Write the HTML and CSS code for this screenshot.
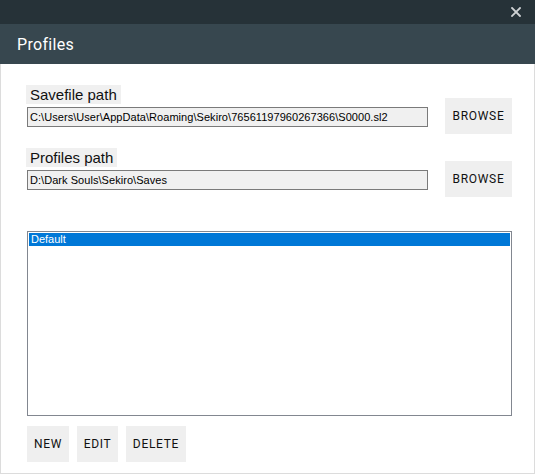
FILE: index.html
```html
<!DOCTYPE html>
<html>
<head>
<meta charset="utf-8">
<link rel="stylesheet" href="styles.css">
</head>
<body>
<div class="window">
  <div class="titlebar">
    <span class="close" aria-label="Close">
      <svg width="10" height="10" viewBox="0 0 10 10"><path d="M1 1 L9 9 M9 1 L1 9" stroke="#cfd2d4" stroke-width="1.8" stroke-linecap="square" fill="none"/></svg>
    </span>
  </div>
  <div class="header">Profiles</div>
  <div class="content">
    <div class="row">
      <div class="field">
        <span class="label">Savefile path</span>
        <div class="textbox">C:\Users\User\AppData\Roaming\Sekiro\76561197960267366\S0000.sl2</div>
      </div>
      <button class="btn browse">BROWSE</button>
    </div>
    <div class="row row2">
      <div class="field">
        <span class="label">Profiles path</span>
        <div class="textbox">D:\Dark Souls\Sekiro\Saves</div>
      </div>
      <button class="btn browse">BROWSE</button>
    </div>
    <div class="listbox">
      <div class="item selected">Default</div>
    </div>
    <div class="actions">
      <button class="btn btn-new">NEW</button>
      <button class="btn btn-edit">EDIT</button>
      <button class="btn btn-delete">DELETE</button>
    </div>
  </div>
</div>
</body>
</html>
```

FILE: styles.css
```css
html, body {
  margin: 0;
  padding: 0;
  background: #ffffff;
}

.window {
  width: 535px;
  height: 474px;
  display: flex;
  flex-direction: column;
}

.titlebar {
  height: 24px;
  background: #263238;
  display: flex;
  justify-content: flex-end;
  align-items: center;
}

.close {
  width: 10px;
  height: 10px;
  margin-right: 14px;
  display: flex;
}

.header {
  height: 40px;
  background: #37474f;
  color: #ffffff;
  font-family: Roboto, "Liberation Sans", sans-serif;
  font-size: 16px;
  font-weight: 400;
  letter-spacing: 0.3px;
  padding-left: 17px;
  display: flex;
  align-items: center;
  box-sizing: border-box;
  padding-top: 1px;
}

.content {
  flex: 1;
  border: 1px solid #dcdcdc;
  border-top: none;
  padding: 21px 0 0 25px;
  box-sizing: border-box;
  display: flex;
  flex-direction: column;
}

.row {
  display: flex;
  align-items: flex-start;
}

.row2 {
  margin-top: 14px;
}

.field {
  display: flex;
  flex-direction: column;
  align-items: flex-start;
}

.label {
  background: #f0f0f0;
  font-family: "Liberation Sans", Arial, sans-serif;
  font-size: 15px;
  line-height: 19px;
  height: 19px;
  color: #111;
  padding: 0 4px 0 4px;
}

.textbox {
  margin-top: 3px;
  margin-left: 1px;
  width: 401px;
  height: 20px;
  box-sizing: border-box;
  border: 1px solid #7a7a7a;
  background: #f0f0f0;
  font-family: "Liberation Sans", Arial, sans-serif;
  font-size: 11px;
  letter-spacing: 0.05px;
  line-height: 18px;
  color: #000;
  padding-left: 2px;
  white-space: nowrap;
  overflow: hidden;
}

.btn {
  height: 36px;
  border: none;
  background: #efefef;
  font-family: Roboto, "Liberation Sans", sans-serif;
  font-size: 12px;
  font-weight: 400;
  letter-spacing: 0.7px;
  color: #111;
  padding: 0;
  margin: 0;
  text-align: center;
}

.browse {
  width: 67px;
  margin-left: 17px;
  margin-top: 13px;
}

.btn-new { width: 42px; }
.btn-edit { width: 41px; }
.btn-delete { width: 60px; }

.listbox {
  margin-top: 34px;
  margin-left: 1px;
  width: 485px;
  height: 185px;
  box-sizing: border-box;
  border: 1px solid #828790;
  padding: 1px;
  background: #fff;
}

.item {
  height: 13px;
  font-family: "Liberation Sans", Arial, sans-serif;
  font-size: 11px;
  line-height: 13px;
  padding-left: 2px;
}

.selected {
  background: #0078d7;
  color: #fff;
}

.actions {
  margin-top: 10px;
  margin-left: 1px;
  display: flex;
  gap: 8px;
}
```
